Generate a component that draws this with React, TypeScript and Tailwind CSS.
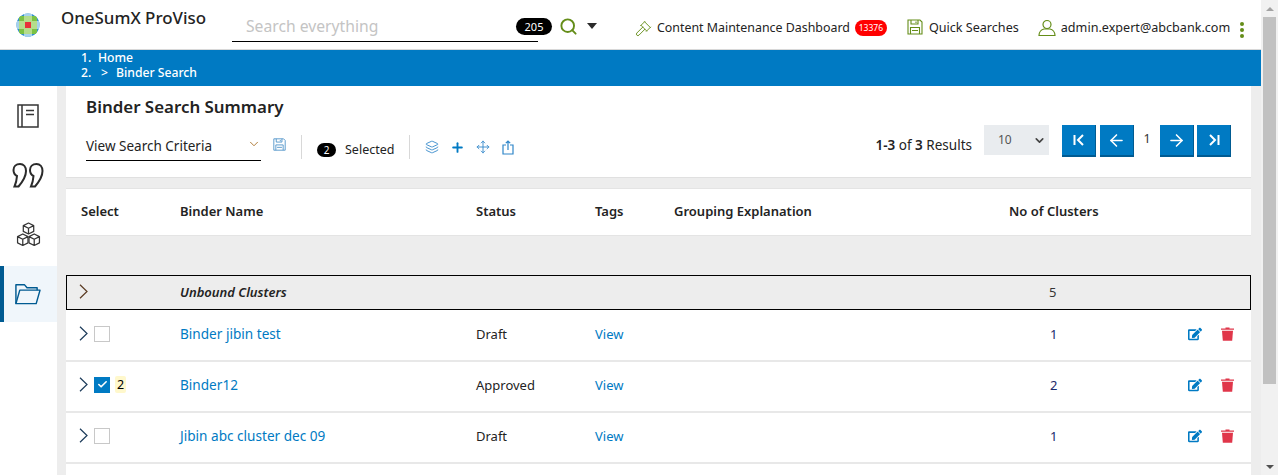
import React from 'react';
import { ChevronDown, Layers, Plus, Move, ArrowLeft, ArrowRight, Gavel, Search, Check } from 'lucide-react';
import { FaEdit } from 'react-icons/fa';

const font = "font-['Noto_Sans','Open_Sans',sans-serif]";

const Logo = () => (
  <svg width="24" height="24" viewBox="0 0 24 24">
    <defs>
      <clipPath id="logo-clip"><circle cx="12" cy="12" r="11.5" /></clipPath>
    </defs>
    <g clipPath="url(#logo-clip)">
      <rect width="24" height="24" fill="#2f8fd0" />
      <rect x="3" y="3" width="18" height="18" fill="#7cc243" />
      <rect x="8" y="3" width="8" height="18" fill="#b5dc8c" />
      <rect x="3" y="8" width="18" height="8" fill="#b5dc8c" />
      <rect x="8" y="0" width="8" height="3" fill="#a6d1ec" />
      <rect x="8" y="21" width="8" height="3" fill="#a6d1ec" />
      <rect x="0" y="8" width="3" height="8" fill="#a6d1ec" />
      <rect x="21" y="8" width="3" height="8" fill="#a6d1ec" />
      <rect x="9" y="9" width="6" height="6" fill="#e8303a" />
    </g>
  </svg>
);

const BookIcon = () => (
  <svg width="22" height="24" viewBox="0 0 22 24" fill="none" stroke="#353535" strokeWidth="1.5">
    <rect x="1" y="1" width="20" height="22" />
    <path d="M5 1v22M9 6.5h8M9 10.5h8" />
  </svg>
);

const QuoteIcon = () => (
  <svg width="32" height="25" viewBox="0 0 32 25" fill="none" stroke="#2b2b2b" strokeWidth="2">
    <path d="M8 1C4 1 1.500 3.500 1.500 7c0 3 1.500 5 3.500 6-.300 4-1.200 7.500-2.500 10.500h4C9.500 20 14 14 14 8c0-4-2.500-7-6-7z" />
    <path d="M24.500 1c-4 0-6.500 2.500-6.500 6 0 3 1.500 5 3.500 6-.300 4-1.200 7.500-2.500 10.500h4c3-3.500 7.500-9.500 7.500-15.500 0-4-2.500-7-6-7z" />
  </svg>
);

const CubesIcon = () => (
  <svg width="25" height="25" viewBox="0 0 24 24" fill="none" stroke="#353535" strokeWidth="1.200" strokeLinejoin="round">
    <path d="M12 1l5 2.500v5.500l-5 2.500-5-2.500V3.500z M7 3.500l5 2.500 5-2.500 M12 6v5.500" />
    <path d="M6.500 11.500l5 2.500v6l-5 2.500-5-2.500v-6z M1.500 14l5 2.500 5-2.500 M6.500 16.500v6" />
    <path d="M17.500 11.500l5 2.500v6l-5 2.500-5-2.500v-6z M12.500 14l5 2.500 5-2.500 M17.500 16.500v6" />
  </svg>
);

const FolderIcon = () => (
  <svg width="27" height="24" viewBox="0 0 28 24" fill="none" stroke="#005b92" strokeWidth="1.500" strokeLinejoin="round">
    <path d="M2 22V2.500h9l2.500 3H24V8" />
    <path d="M2 22L6 8h21l-4 14z" />
  </svg>
);

const FloppyIcon = ({ size, color }: { size: number; color: string }) => (
  <svg width={size} height={size} viewBox="0 0 16 16" fill="none" stroke={color} strokeWidth="1.100" className="shrink-0">
    <path d="M1 1h12l2 2v12H1z" />
    <path d="M4 1v4h7V1M9 2.500v1.500" />
    <path d="M3.500 15V8.500h9V15M5 11.500h6" />
  </svg>
);

const UserIcon = () => (
  <svg width="18" height="18" viewBox="0 0 18 18" fill="none" stroke="#648d18" strokeWidth="1.200">
    <circle cx="9" cy="5.500" r="4" />
    <path d="M1 16.500c0-3.500 2.500-6 5-6.500h6c2.500.5 5 3 5 6.500z" />
  </svg>
);

const UploadIcon = () => (
  <svg width="12" height="15" viewBox="0 0 12 15" fill="none" stroke="#2f86c9" strokeWidth="1.200">
    <path d="M4 5H1v9h10V5H8M6 10V1M3.800 3.200L6 1l2.200 2.200" />
  </svg>
);

const Caret = ({ color }: { color: string }) => (
  <svg width="9" height="15" viewBox="0 0 9 15" fill="none" stroke={color} strokeWidth="1.200" className="shrink-0">
    <path d="M1 .8L8 7.500 1 14.200" />
  </svg>
);

const TrashIcon = () => (
  <svg width="13" height="14" viewBox="0 0 13 14" fill="#e0364a" className="shrink-0">
    <path d="M0 1.500h4.500V.5h4v1H13v1.200H0z" />
    <path d="M1 3.800h11l-.8 10H1.800z" />
  </svg>
);

const FirstIcon = () => (
  <svg width="14" height="14" viewBox="0 0 14 14" fill="none" stroke="#fff" strokeWidth="2">
    <path d="M2.500 2v10M11 2L6 7l5 5" />
  </svg>
);

const LastIcon = () => (
  <svg width="14" height="14" viewBox="0 0 14 14" fill="none" stroke="#fff" strokeWidth="2">
    <path d="M11.500 2v10M3 2l5 5-5 5" />
  </svg>
);

const PageButton = ({ children, className = '' }: { children: React.ReactNode; className?: string }) => (
  <button className={`w-[34px] h-[32px] bg-[#007ac3] border-b-2 border-r border-[#005b92] flex items-center justify-center ${className}`}>
    {children}
  </button>
);

const rows = [
  { name: 'Binder jibin test', status: 'Draft', clusters: '1', checked: false },
  { name: 'Binder12', status: 'Approved', clusters: '2', checked: true },
  { name: 'Jibin abc cluster dec 09', status: 'Draft', clusters: '1', checked: false },
];

export default function App() {
  return (
    <div className={`h-[475px] w-[1278px] overflow-hidden flex bg-white text-[#232323] ${font}`}>
      <div className="flex-1 min-w-0 flex flex-col">
        {/* top bar */}
        <header className="h-[50px] shrink-0 flex border-b border-[#d8d8d8]">
          <div className="w-[61px] pl-[16px] pt-[13px] shrink-0"><Logo /></div>
          <div className="w-[171px] shrink-0 pt-[6px] text-[16.900px] leading-[24px] font-medium text-[#232323]">OneSumX ProViso</div>
          <div className="w-[306px] shrink-0 h-[42px] border-b border-black pl-[14px] pt-[14px] text-[15.700px] leading-[24px] text-[#c4c4c4]">Search everything</div>
          <div className="w-[36px] h-[17px] mt-[18px] -ml-[22px] rounded-full bg-black text-white text-[11px] leading-[17px] text-center shrink-0">205</div>
          <Search className="ml-[7px] mt-[17px] shrink-0" size={19} color="#648d18" strokeWidth={2.400} />
          <div className="ml-[9px] mt-[23px] shrink-0 w-0 h-0 border-x-[5px] border-x-transparent border-t-[6px] border-t-[#2b2b2b]" />
          <div className="ml-[38px] pt-[19px] flex items-start shrink-0 text-[12.400px] leading-[18px]">
            <Gavel size={17} color="#648d18" strokeWidth={1.300} className="mr-[5px] mt-[1px]" />
            <span>Content Maintenance Dashboard</span>
            <span className="ml-[5px] mt-[1px] w-[32px] h-[16px] rounded-full bg-[#f00] text-white text-[8.500px] leading-[16px] text-center">13376</span>
          </div>
          <div className="ml-[20px] pt-[19px] flex items-start shrink-0 text-[12.600px] leading-[18px]">
            <FloppyIcon size={16} color="#648d18" />
            <span className="ml-[6px]">Quick Searches</span>
          </div>
          <div className="ml-[19px] pt-[19px] flex items-start shrink-0 text-[12.600px] leading-[18px]">
            <UserIcon />
            <span className="ml-[5px]">admin.expert@abcbank.com</span>
          </div>
          <div className="ml-[10px] mt-[22px] flex flex-col gap-[2px] shrink-0">
            <span className="w-[4px] h-[4px] rounded-full bg-[#648d18]" />
            <span className="w-[4px] h-[4px] rounded-full bg-[#648d18]" />
            <span className="w-[4px] h-[4px] rounded-full bg-[#648d18]" />
          </div>
        </header>

        {/* breadcrumb */}
        <nav className="h-[36px] shrink-0 bg-[#007ac3] pl-[81px] text-white text-[12.200px] leading-[15px] font-medium">
          <div className="flex"><span className="w-[17px]">1.</span><span>Home</span></div>
          <div className="flex"><span className="w-[20px]">2.</span><span className="w-[15px]">&gt;</span><span>Binder Search</span></div>
        </nav>

        <div className="flex-1 min-h-0 flex">
          {/* side nav */}
          <aside className="w-[57px] shrink-0 flex flex-col">
            <div className="h-[60px] flex items-center justify-center pr-[1px]"><BookIcon /></div>
            <div className="h-[60px] pt-[17px] flex justify-center pr-[1px]"><QuoteIcon /></div>
            <div className="h-[60px] pt-[16px] flex items-start justify-center"><CubesIcon /></div>
            <div className="h-[56px] bg-[#f0f6fb] border-l-[4px] border-[#005b92] flex items-center pl-[10px]"><FolderIcon /></div>
          </aside>

          {/* content */}
          <main className="flex-1 min-w-0 bg-[#ededed] pl-[9px] pr-[10px]">
            <section className="h-[92px] bg-white border-b border-[#e0e0e0] relative">
              <h1 className="pl-[20px] pt-[8px] text-[16.900px] leading-[26px] font-semibold text-[#232323]">Binder Search Summary</h1>
              <div className="flex items-start pl-[20px] pt-[5px]">
                <div className="w-[175px] h-[36px] border-b border-black flex justify-between pt-[12px] text-[13.500px] leading-[18px]">
                  <span>View Search Criteria</span>
                  <ChevronDown size={14} color="#a56a1f" strokeWidth={1.500} />
                </div>
                <div className="ml-[12px] mt-[13px]"><FloppyIcon size={13} color="#4f93c9" /></div>
                <div className="ml-[15px] mt-[10px] h-[24px] border-l border-[#d8d8d8]" />
                <span className="ml-[15px] mt-[18px] w-[19px] h-[14px] rounded-full bg-black text-white text-[10px] leading-[14px] text-center">2</span>
                <span className="ml-[9px] mt-[16px] text-[12.500px] leading-[18px]">Selected</span>
                <div className="ml-[15px] mt-[10px] h-[24px] border-l border-[#d8d8d8]" />
                <Layers size={14} color="#2f86c9" strokeWidth={1.500} className="ml-[15px] mt-[15px]" />
                <Plus size={15} color="#007ac3" strokeWidth={3} className="ml-[11px] mt-[15px]" />
                <Move size={14} color="#2f86c9" strokeWidth={1.500} className="ml-[11px] mt-[15px]" />
                <div className="ml-[12px] mt-[15px]"><UploadIcon /></div>
                <div className="ml-auto flex items-start pr-[20px]">
                  <span className="mt-[11px] text-[13.500px] leading-[18px]"><b className="font-semibold">1-3</b> of <b className="font-semibold">3</b> Results</span>
                  <div className="ml-[12px] w-[65px] h-[30px] bg-[#e9ecef] flex items-center justify-between pl-[14px] pr-[3px] text-[12px] text-[#555]">
                    <span>10</span>
                    <ChevronDown size={13} color="#444" strokeWidth={3} />
                  </div>
                  <PageButton className="ml-[13px]"><FirstIcon /></PageButton>
                  <PageButton className="ml-[4px]"><ArrowLeft size={19} color="#fff" strokeWidth={2} /></PageButton>
                  <span className="w-[26px] text-center text-[12.500px] leading-[28px] text-[#353535]">1</span>
                  <PageButton><ArrowRight size={19} color="#fff" strokeWidth={2} /></PageButton>
                  <PageButton className="ml-[3px]"><LastIcon /></PageButton>
                </div>
              </div>
            </section>

            <div className="mt-[10px] h-[48px] bg-white border-y border-[#e4e4e4] grid grid-cols-[99px_296px_119px_79px_335px_1fr] items-center pl-[15px] text-[13px] font-semibold">
              <span>Select</span>
              <span>Binder Name</span>
              <span>Status</span>
              <span>Tags</span>
              <span>Grouping Explanation</span>
              <span>No of Clusters</span>
            </div>

            {/* unbound row */}
            <div className="mt-[39px] h-[35px] border border-black bg-[#ededed] grid grid-cols-[100px_882px_1fr] items-center text-[13px]">
              <div className="pl-[12px] -mt-[3px]"><Caret color="#5a3a22" /></div>
              <span className="pl-[13px] italic font-semibold">Unbound Clusters</span>
              <span className="text-[#353535]">5</span>
            </div>

            <div className="bg-white pt-[1px]">
              {rows.map((row) => (
                <div key={row.name} className="h-[51px] pb-[3px] border-b-2 border-[#e8e8e8] flex items-center text-[13px] leading-[20px]">
                  <div className="w-[114px] flex items-center pl-[13px] -mt-[1px] shrink-0">
                    <Caret color="#1c3b5a" />
                    <span className={`ml-[6px] w-[16px] h-[16px] border flex items-center justify-center ${row.checked ? 'bg-[#007ac3] border-[#007ac3]' : 'bg-white border-[#c8c8c8]'}`}>
                      {row.checked && <Check size={11} color="#fff" strokeWidth={3.500} />}
                    </span>
                    {row.checked && <span className="ml-[5px] w-[11px] h-[17px] bg-[#fff8cc] rounded-[2px] text-center text-[12.500px] leading-[17px] text-black">2</span>}
                  </div>
                  <span className="w-[296px] -mt-[1px] text-[13.600px] text-[#007ac3] shrink-0">{row.name}</span>
                  <span className="w-[119px] shrink-0">{row.status}</span>
                  <span className="w-[455px] text-[#007ac3] shrink-0">View</span>
                  <span className="w-[138px] text-[#1b2a6b] shrink-0">{row.clusters}</span>
                  <FaEdit size={14} color="#007ac3" className="shrink-0" />
                  <span className="ml-[19px]"><TrashIcon /></span>
                </div>
              ))}
              <div className="h-[20px]" />
            </div>
          </main>
        </div>
      </div>

      {/* scrollbar */}
      <div className="w-[17px] shrink-0 bg-[#f1f1f1] pl-[2px] pr-[2px] flex flex-col items-center">
        <div className="h-[17px] flex items-center justify-center">
          <div className="w-0 h-0 border-x-[4px] border-x-transparent border-b-[4px] border-b-[#a3a3a3]" />
        </div>
        <div className="w-[13px] h-[367px] bg-[#c1c1c1]" />
        <div className="mt-auto h-[17px] flex items-center justify-center">
          <div className="w-0 h-0 border-x-[4px] border-x-transparent border-t-[4px] border-t-[#505050]" />
        </div>
      </div>
    </div>
  );
}
